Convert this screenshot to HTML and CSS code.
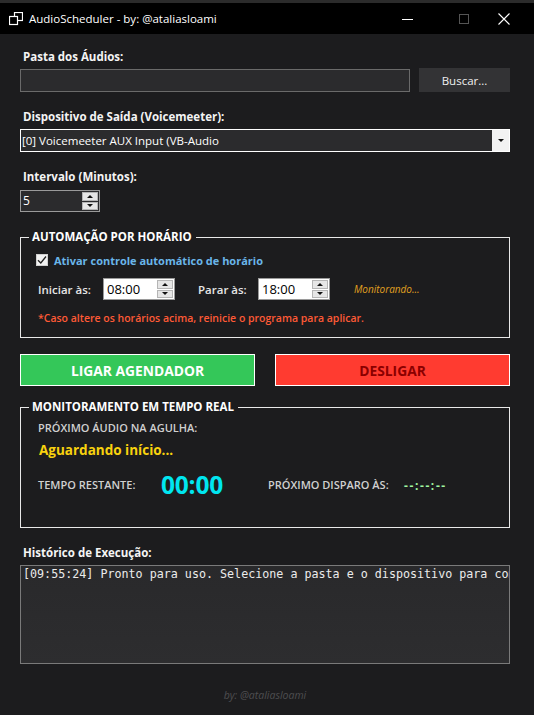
FILE: index.html
```html
<!DOCTYPE html>
<html lang="pt-BR">
<head>
<meta charset="utf-8">
<title>AudioScheduler</title>
<link rel="stylesheet" href="styles.css">
</head>
<body>
<div class="window">
  <header class="titlebar">
    <svg class="app-icon" width="14" height="14" viewBox="0 0 14 14">
      <rect x="5.5" y="0.5" width="8" height="8" fill="none" stroke="#fff" stroke-width="1.2"/>
      <rect x="0.5" y="4.5" width="8" height="8" fill="#000" stroke="#fff" stroke-width="1.2"/>
    </svg>
    <span class="title">AudioScheduler - by: @ataliasloami</span>
    <div class="controls">
      <svg class="ctl" width="12" height="12" viewBox="0 0 12 12"><line x1="0" y1="6.5" x2="11" y2="6.5" stroke="#fff" stroke-width="1"/></svg>
      <svg class="ctl" width="12" height="12" viewBox="0 0 12 12"><rect x="1.5" y="1.5" width="9" height="9" fill="none" stroke="#555" stroke-width="1"/></svg>
      <svg class="ctl" width="12" height="12" viewBox="0 0 12 12"><path d="M0.5 0.5 L11.5 11.5 M11.5 0.5 L0.5 11.5" stroke="#fff" stroke-width="1.1"/></svg>
    </div>
  </header>

  <main class="content">
    <label class="field-label first">Pasta dos Áudios:</label>
    <div class="folder-row">
      <div class="text-input"></div>
      <button class="btn-browse">Buscar...</button>
    </div>

    <label class="field-label">Dispositivo de Saída (Voicemeeter):</label>
    <div class="combo">
      <span class="combo-text">[0] Voicemeeter AUX Input (VB-Audio</span>
      <span class="combo-arrow"><span class="tri-down"></span></span>
    </div>

    <label class="field-label">Intervalo (Minutos):</label>
    <div class="spin spin-dark">
      <span class="spin-value">5</span>
      <span class="spin-btns">
        <span class="spin-btn"><span class="tri-up"></span></span>
        <span class="spin-btn"><span class="tri-down"></span></span>
      </span>
    </div>

    <fieldset class="group group-auto">
      <legend>AUTOMAÇÃO POR HORÁRIO</legend>
      <div class="check-row">
        <span class="checkbox">
          <svg width="10" height="10" viewBox="0 0 10 10"><path d="M1 5.2 L3.8 8 L9 1.5" fill="none" stroke="#222" stroke-width="1.3"/></svg>
        </span>
        <span class="check-label">Ativar controle automático de horário</span>
      </div>
      <div class="time-row">
        <span class="time-label start">Iniciar às:</span>
        <div class="spin spin-light">
          <span class="spin-value">08:00</span>
          <span class="spin-btns">
            <span class="spin-btn"><span class="tri-up"></span></span>
            <span class="spin-btn"><span class="tri-down"></span></span>
          </span>
        </div>
        <span class="time-label stop">Parar às:</span>
        <div class="spin spin-light">
          <span class="spin-value">18:00</span>
          <span class="spin-btns">
            <span class="spin-btn"><span class="tri-up"></span></span>
            <span class="spin-btn"><span class="tri-down"></span></span>
          </span>
        </div>
        <span class="status">Monitorando...</span>
      </div>
      <p class="note">*Caso altere os horários acima, reinicie o programa para aplicar.</p>
    </fieldset>

    <div class="actions">
      <button class="btn-action btn-on">LIGAR AGENDADOR</button>
      <button class="btn-action btn-off">DESLIGAR</button>
    </div>

    <fieldset class="group group-monitor">
      <legend>MONITORAMENTO EM TEMPO REAL</legend>
      <div class="mon-caption">PRÓXIMO ÁUDIO NA AGULHA:</div>
      <div class="mon-track">Aguardando início...</div>
      <div class="mon-row">
        <span class="mon-caption col-a">TEMPO RESTANTE:</span>
        <span class="countdown">00:00</span>
        <span class="mon-caption col-c">PRÓXIMO DISPARO ÀS:</span>
        <span class="next-time">--:--:--</span>
      </div>
    </fieldset>

    <label class="field-label history-label">Histórico de Execução:</label>
    <div class="log">
      <div class="log-line">[09:55:24] Pronto para uso. Selecione a pasta e o dispositivo para começar.</div>
    </div>

    <footer class="footer">by: @ataliasloami</footer>
  </main>
</div>
</body>
</html>
```

FILE: styles.css
```css
* { box-sizing: border-box; }

html, body {
  margin: 0;
  padding: 0;
  background: #1c1c1e;
}

body {
  font-family: "Open Sans", "Noto Sans", sans-serif;
  color: #f2f2f2;
}

.window {
  width: 534px;
  height: 715px;
  display: flex;
  flex-direction: column;
  background: #1c1c1e;
  overflow: hidden;
}

/* ---- title bar ---- */
.titlebar {
  height: 34px;
  border-top: 3px solid #2b2b2b;
  background: #000;
  display: flex;
  align-items: center;
  padding-left: 9px;
  flex-shrink: 0;
}

.app-icon { flex-shrink: 0; }

.title {
  margin-left: 6px;
  font-size: 11.5px;
  color: #fff;
  white-space: nowrap;
}

.controls {
  margin-left: auto;
  display: flex;
  align-items: center;
}

.ctl { display: block; }
.ctl:nth-child(1) { margin-right: 44px; }
.ctl:nth-child(2) { margin-right: 28px; }
.ctl:nth-child(3) { margin-right: 24px; }

/* ---- form body ---- */
.content {
  flex: 1;
  display: flex;
  flex-direction: column;
  padding: 0 24px 0 20px;
}

.field-label {
  display: block;
  font-size: 11.5px;
  font-weight: 700;
  line-height: 16px;
  height: 16px;
  padding-left: 3px;
  margin-top: 17px;
  color: #f4f4f4;
  white-space: nowrap;
}

.field-label.first { margin-top: 15px; }

.folder-row {
  margin-top: 3px;
  display: flex;
  align-items: flex-start;
  gap: 9px;
}

.text-input {
  margin-top: 1px;
  width: 390px;
  height: 23px;
  background: #2b2b2d;
  border: 1px solid #6a6a6a;
}

.btn-browse {
  width: 91px;
  height: 24px;
  border: none;
  background: #333335;
  color: #f0f0f0;
  font-family: inherit;
  font-size: 11.5px;
  padding: 0;
}

.combo {
  margin-top: 4px;
  height: 23px;
  display: flex;
  background: #2b2b2d;
  border: 1px solid #ffffff;
}

.combo-text {
  flex: 1;
  font-size: 11.5px;
  line-height: 21px;
  padding-left: 1px;
  color: #fff;
  white-space: nowrap;
}

.combo-arrow {
  width: 17px;
  background: #f2f2f2;
  display: flex;
  align-items: center;
  justify-content: center;
}

.tri-down {
  width: 0;
  height: 0;
  border-left: 3px solid transparent;
  border-right: 3px solid transparent;
  border-top: 3px solid #111;
}

.tri-up {
  width: 0;
  height: 0;
  border-left: 3px solid transparent;
  border-right: 3px solid transparent;
  border-bottom: 3px solid #111;
}

/* ---- numeric up/down ---- */
.spin {
  display: flex;
  align-items: stretch;
  border: 1px solid #8a8a8a;
}

.spin-value {
  flex: 1;
  padding-left: 2px;
  white-space: nowrap;
}

.spin-btns {
  width: 17px;
  display: flex;
  flex-direction: column;
  padding: 1px 1px 1px 0;
  gap: 1px;
}

.spin-btn {
  flex: 1;
  background: #e6e6e6;
  border: 1px solid #b5b5b5;
  display: flex;
  align-items: center;
  justify-content: center;
}

.spin-dark {
  margin-top: 5px;
  width: 80px;
  height: 22px;
  background: #2b2b2d;
  border-color: #9a9a9a;
}

.spin-dark .spin-value {
  font-size: 12px;
  line-height: 20px;
  color: #fff;
}

.spin-light {
  width: 72px;
  height: 22px;
  background: #ffffff;
  border-color: #9a9a9a;
}

.spin-light .spin-value {
  font-size: 13px;
  line-height: 20px;
  color: #000;
  padding-left: 3px;
}

/* ---- group boxes ---- */
.group {
  margin: 0;
  padding: 0 0 0 17px;
  border: 1px solid #e8e8e8;
  min-width: 0;
}

.group legend {
  margin-left: -9px;
  padding: 0 4px 0 3px;
  font-size: 11.5px;
  font-weight: 700;
  line-height: 16px;
  color: #fff;
  white-space: nowrap;
}

.group-auto {
  margin-top: 17px;
  padding-bottom: 12px;
}

.check-row {
  margin-top: 7px;
  margin-left: -2px;
  display: flex;
  align-items: center;
  height: 16px;
}

.checkbox {
  width: 12px;
  height: 12px;
  background: #f2f2f2;
  border: 1px solid #d0d0d0;
  display: flex;
  align-items: center;
  justify-content: center;
}

.check-label {
  margin-left: 6px;
  font-size: 11px;
  font-weight: 700;
  color: #6ab6ea;
  white-space: nowrap;
}

.time-row {
  margin-top: 10px;
  height: 22px;
  display: flex;
  align-items: center;
}

.time-label {
  font-size: 11.5px;
  font-weight: 600;
  color: #e6e6e6;
  white-space: nowrap;
}

.time-label.start { width: 65px; }
.time-label.stop { width: 60px; margin-left: 23px; }

.status {
  margin-left: 24px;
  font-size: 10px;
  font-style: italic;
  color: #e0a020;
  white-space: nowrap;
}

.note {
  margin: 11px 0 0 0;
  font-size: 10.5px;
  font-weight: 600;
  line-height: 14px;
  color: #ff5a36;
  white-space: nowrap;
}

/* ---- start / stop ---- */
.actions {
  margin-top: 16px;
  display: flex;
  gap: 20px;
}

.btn-action {
  flex: 1;
  height: 32px;
  border: 1px solid #ffffff;
  font-family: inherit;
  font-size: 13.8px;
  font-weight: 700;
  padding: 0;
}

.btn-on {
  background: #34c759;
  color: #ffffff;
}

.btn-off {
  background: #ff3b30;
  color: #8b0000;
}

/* ---- live monitor ---- */
.group-monitor {
  margin-top: 13px;
  padding-bottom: 28px;
}

.mon-caption {
  font-size: 11px;
  font-weight: 600;
  line-height: 14px;
  color: #d0d0d0;
  white-space: nowrap;
}

.group-monitor > .mon-caption { margin-top: 6px; }

.mon-track {
  margin-top: 6px;
  margin-left: 1px;
  font-size: 13.5px;
  font-weight: 700;
  line-height: 18px;
  color: #f8d20e;
}

.mon-row {
  margin-top: 12px;
  height: 28px;
  display: flex;
  align-items: center;
}

.col-a { width: 123px; }

.countdown {
  width: 107px;
  font-size: 24.5px;
  font-weight: 700;
  color: #00e6f0;
  line-height: 28px;
  letter-spacing: -0.2px;
}

.col-c { width: 136px; }

.next-time {
  font-size: 12px;
  font-weight: 700;
  letter-spacing: 1.6px;
  color: #a0f5a0;
}

/* ---- history ---- */
.history-label { margin-top: 17px; }

.log {
  margin-top: 4px;
  height: 99px;
  border: 1px solid #7a7a7a;
  background: linear-gradient(180deg, #29292b 0%, #2d2d2f 100%);
  overflow: hidden;
  padding: 1px 0 0 2px;
}

.log-line {
  font-family: "DejaVu Sans Mono", "Liberation Mono", monospace;
  font-size: 11.7px;
  line-height: 14px;
  color: #ececec;
  white-space: nowrap;
}

.footer {
  margin-top: 24px;
  text-align: center;
  font-size: 10.5px;
  font-style: italic;
  line-height: 14px;
  color: #4e4e50;
}
```
